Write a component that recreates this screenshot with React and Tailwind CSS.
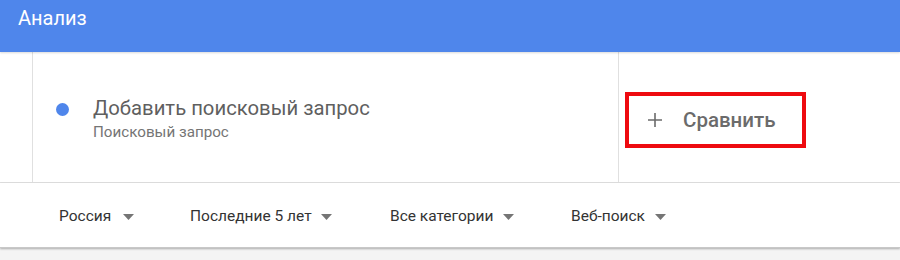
export default function App() {
  const Tri = ({ ml }) => (
    <svg width="11" height="6" viewBox="0 0 11 6" className={ml}>
      <path d="M0 0 L11 0 L5.5 6 Z" fill="#757575" />
    </svg>
  );
  return (
    <div className="w-[900px] h-[260px] bg-[#f4f4f4] overflow-hidden" style={{ fontFamily: "Roboto, 'Noto Sans', sans-serif" }}>
      <div className="h-[52px] bg-[#4f86eb] text-white text-[20px] pl-[18px] pt-[5px] leading-[26px] shadow-[0_1px_2px_rgba(0,0,0,0.15)] relative z-10">
        Анализ
      </div>
      <div className="flex h-[131px] bg-white border-b border-[#e0e0e0]">
        <div className="w-[33px] border-r border-[#e0e0e0]" />
        <div className="w-[586px] border-r border-[#e0e0e0] flex items-center pl-[23px] pt-[3px]">
          <div className="w-[13px] h-[13px] rounded-full bg-[#4f86eb] mr-[24px] -mt-[19px]" />
          <div className="flex flex-col">
            <div className="text-[20.3px] leading-[24px] text-[#5f5f5f]">Добавить поисковый запрос</div>
            <div className="text-[15.2px] leading-[20px] text-[#757575] mt-[2px]">Поисковый запрос</div>
          </div>
        </div>
        <div className="flex-1 flex items-center pl-[6px] pt-[6px]">
          <div className="w-[181px] h-[56px] border-[4px] border-[#ee0a10] flex items-center pl-[18px]">
            <svg width="16" height="16" viewBox="0 0 16 16">
              <path d="M8 1 V15 M1 8 H15" stroke="#6b6b6b" strokeWidth="1.6" />
            </svg>
            <span className="ml-[20px] text-[20.5px] font-medium text-[#6b6b6b]">Сравнить</span>
          </div>
        </div>
      </div>
      <div className="h-[65px] bg-white flex items-center pl-[59px] pt-[3px] text-[15.5px] text-[#333] shadow-[0_1px_2px_rgba(0,0,0,0.3)] border-b border-[#c8c8c8]">
        <div className="flex items-center w-[131px]">Россия<Tri ml="ml-[12px]" /></div>
        <div className="flex items-center w-[200px]">Последние 5 лет<Tri ml="ml-[9px]" /></div>
        <div className="flex items-center w-[181px]">Все категории<Tri ml="ml-[10px]" /></div>
        <div className="flex items-center">Веб-поиск<Tri ml="ml-[10px]" /></div>
      </div>
    </div>
  );
}
